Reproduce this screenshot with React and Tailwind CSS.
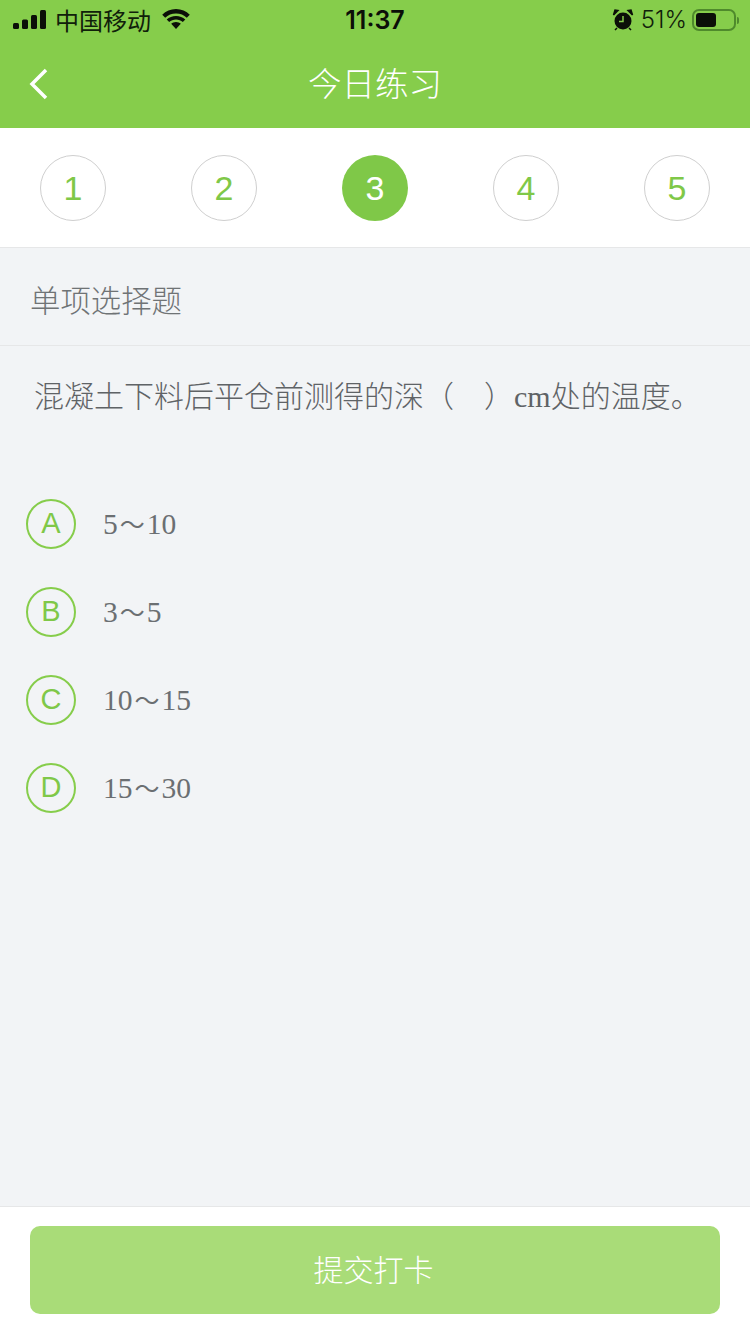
const cjk = 'font-["Noto_Sans_CJK_SC",sans-serif]';

const steps = [1, 2, 3, 4, 5];
const options = [
  { key: 'A', from: '5', to: '10' },
  { key: 'B', from: '3', to: '5' },
  { key: 'C', from: '10', to: '15' },
  { key: 'D', from: '15', to: '30' },
];

function StatusBar() {
  return (
    <div className="grid h-10 grid-cols-[1fr_auto_1fr] items-center pl-[13px] pr-[11px] text-[#10200a]">
      <div className="flex items-center">
        <svg width="34" height="20" viewBox="0 0 34 20" fill="#0b0f08">
          <rect x="0" y="13" width="6" height="6" rx="1.5" />
          <rect x="9" y="9.5" width="6" height="9.5" rx="1.5" />
          <rect x="18" y="5" width="6" height="14" rx="1.5" />
          <rect x="27" y="0" width="6" height="19" rx="1.5" />
        </svg>
        <span className={`ml-2 text-[24px] leading-none ${cjk}`}>中国移动</span>
        <svg className="ml-[10px]" width="30" height="22" viewBox="0 0 30 22" fill="#0b0f08">
          <path d="M15 4.500c4.300 0 8 1.600 10.800 4.200l3-3C25.200 2.200 20.400 0 15 0S4.800 2.200 1.200 5.700l3 3C7 6.100 10.700 4.500 15 4.500z" />
          <path d="M15 10.500c2.700 0 5 1 6.800 2.600l2.500-2.700C21.900 8.200 18.600 6.900 15 6.900s-6.900 1.300-9.300 3.500l2.500 2.700c1.800-1.600 4.100-2.600 6.800-2.600z" />
          <path d="M15 13c-1.900 0-3.500.7-4.800 1.800L15 20l4.800-5.200C18.500 13.700 16.900 13 15 13z" />
        </svg>
      </div>
      <span className="pr-[2px] font-['Inter',sans-serif] text-[25px] leading-none font-semibold text-[#0b0f08]">11:37</span>
      <div className="flex items-center justify-end">
        <svg width="22" height="22" viewBox="0 0 22 22">
          <circle cx="11" cy="12" r="8.500" fill="#0b0f08" />
          <path d="M11 7v5.500H7" stroke="#86cd4b" strokeWidth="1.500" fill="none" />
          <path d="M1.500 6L6 1.500 3 1zM20.500 6L16 1.500 19 1z" fill="#0b0f08" stroke="#0b0f08" strokeWidth="1.500" />
          <path d="M5 19l-2 2M17 19l2 2" stroke="#0b0f08" strokeWidth="1.500" />
        </svg>
        <span className="ml-[7px] font-['Inter',sans-serif] text-[24px] leading-none font-light">51%</span>
        <div className="ml-[5px] flex h-[22px] w-[44px] items-center rounded-[7px] border-2 border-[#4f8a2c] p-[2px]">
          <div className="h-full w-[20px] rounded-[3px] bg-[#0b0f08]" />
        </div>
        <div className="ml-[1px] h-[7px] w-[2px] rounded-r-sm bg-[#4f8a2c]" />
      </div>
    </div>
  );
}

function NavBar() {
  return (
    <div className="grid h-[88px] grid-cols-[1fr_auto_1fr] items-center pb-[4px]">
      <svg className="mt-[4px] ml-[28px]" width="24" height="34" viewBox="0 0 24 34" fill="none" stroke="#fff" strokeWidth="3.500">
        <path d="M18 3L4 17l14 14" />
      </svg>
      <span className={`text-[33.500px] leading-none font-light text-white ${cjk}`}>今日练习</span>
      <span />
    </div>
  );
}

function Steps() {
  return (
    <div className="flex h-[120px] items-center justify-between border-b border-[#e6e7e8] bg-white px-10 pt-[1px]">
      {steps.map((n) => (
        <div
          key={n}
          className={
            n === 3
              ? "flex h-[66px] w-[66px] items-center justify-center rounded-full bg-[#7fc848] font-['Liberation_Sans',sans-serif] text-[34px] text-white"
              : "flex h-[66px] w-[66px] items-center justify-center rounded-full border border-[#cfcfcf] font-['Liberation_Sans',sans-serif] text-[34px] text-[#7fc848]"
          }
        >
          {n}
        </div>
      ))}
    </div>
  );
}

function Option({ item }) {
  return (
    <div className="flex h-[88px] items-center pl-[26px]">
      <div className="flex h-[50px] w-[50px] items-center justify-center rounded-full border-2 border-[#86cd4b] font-['Liberation_Sans',sans-serif] text-[29px] text-[#7fc848]">
        {item.key}
      </div>
      <span className="ml-[27px] font-['Liberation_Serif','Noto_Sans_CJK_SC',serif] text-[29.500px] text-[#6b6f72]">
        {item.from}
        <span className="mx-[2px] text-[25px]">～</span>
        {item.to}
      </span>
    </div>
  );
}

export default function App() {
  return (
    <div className="flex h-[1334px] w-[750px] flex-col overflow-hidden bg-[#f2f4f6]">
      <div className="bg-[#86cd4b]">
        <StatusBar />
        <NavBar />
      </div>
      <Steps />
      <div className={`flex h-[98px] items-center border-b border-[#e6e7e8] pt-[6px] pl-[30px] text-[30.400px] font-light text-[#6f7375] ${cjk}`}>
        单项选择题
      </div>
      <div className="flex-1">
        <p className="mt-[28px] ml-[34px] font-['Noto_Sans_CJK_SC',serif] text-[30px] leading-[40px] font-light whitespace-nowrap text-[#5f6366]">
          混凝土下料后平仓前测得的深（　）<span className="font-['Liberation_Serif',serif]">cm</span>处的温度。
        </p>
        <div className="mt-[63px]">
          {options.map((item) => (
            <Option key={item.key} item={item} />
          ))}
        </div>
      </div>
      <div className="h-[128px] border-t border-[#e6e7e8] bg-white px-[30px] pt-[19px]">
        <button className={`h-[88px] w-full rounded-[10px] bg-[#a9dc78] pr-[3px] pb-[3px] text-[30px] font-light text-white ${cjk}`}>
          提交打卡
        </button>
      </div>
    </div>
  );
}
